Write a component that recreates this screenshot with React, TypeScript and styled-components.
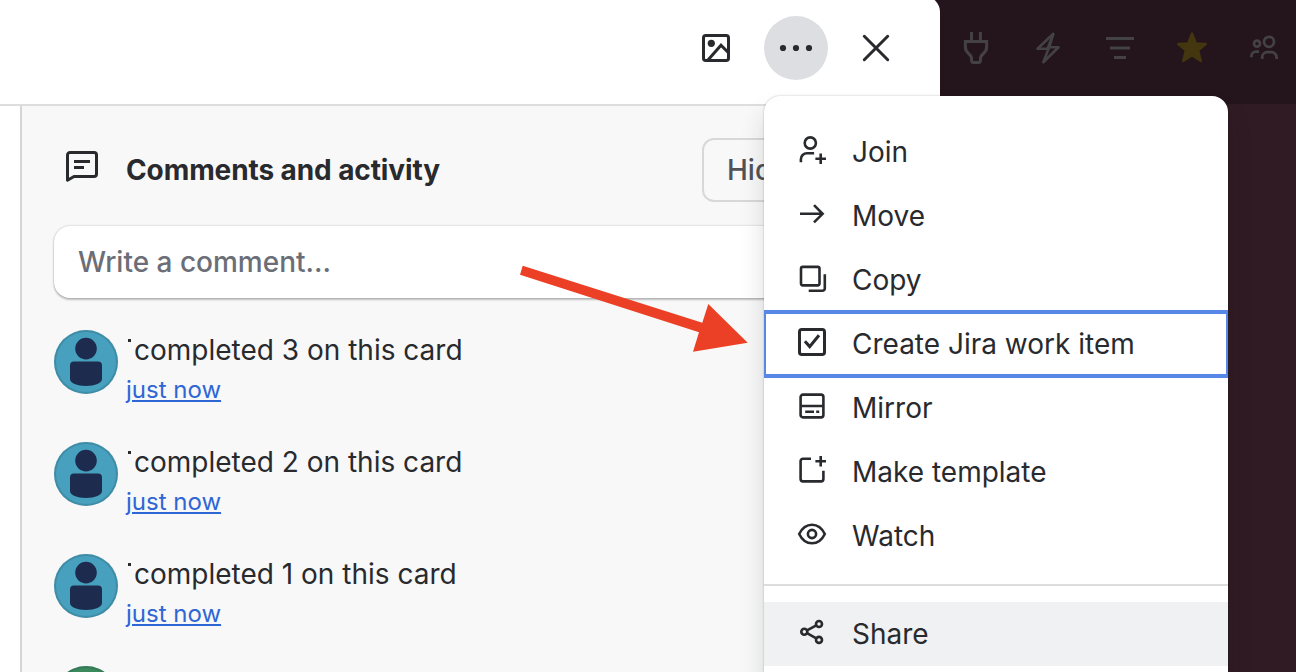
import React from 'react';
import styled, { createGlobalStyle } from 'styled-components';

const GlobalStyle = createGlobalStyle`
  *, *::before, *::after { box-sizing: border-box; }
  body {
    margin: 0;
    overflow: hidden;
    font-family: Inter, "Liberation Sans", sans-serif;
    color: #292a2e;
  }
`;

const Page = styled.div`
  position: relative;
  width: 1296px;
  height: 672px;
  overflow: hidden;
  background: #301a24;
`;

const BoardBar = styled.div`
  display: flex;
  align-items: center;
  justify-content: flex-end;
  gap: 40px;
  height: 104px;
  padding: 0 16px 8px 0;
  background: #24141b;
  color: #434143;
`;

const Glyph = styled.svg<{ $w?: number }>`
  display: block;
  flex: none;
  width: 32px;
  height: 32px;
  overflow: visible;
  fill: none;
  stroke: currentColor;
  stroke-width: ${(p) => p.$w ?? 3};
`;

const CardModal = styled.section`
  position: absolute;
  left: 0;
  top: -4px;
  display: flex;
  flex-direction: column;
  width: 940px;
  height: 680px;
  border-top-right-radius: 16px;
  background: #fff;
  overflow: hidden;
`;

const ModalHeader = styled.header`
  display: flex;
  align-items: center;
  justify-content: flex-end;
  gap: 16px;
  flex: none;
  height: 110px;
  padding: 0 32px 4px 0;
  border-bottom: 2px solid #dddddd;
`;

const RoundButton = styled.button<{ $active?: boolean }>`
  display: grid;
  place-items: center;
  width: 64px;
  height: 64px;
  padding: 0;
  border: 0;
  border-radius: 50%;
  background: ${(p) => (p.$active ? '#dddee1' : 'transparent')};
  color: #292a2e;
`;

const Activity = styled.aside`
  flex: 1;
  margin-left: 20px;
  padding: 32px 32px 0;
  border-left: 2px solid #d4d5d6;
  background: #f8f8f8;
`;

const TitleRow = styled.div`
  display: flex;
  align-items: center;
  height: 64px;
  padding-left: 12px;
  svg { margin: -8px 28px 0 0; }
`;

const Title = styled.h2`
  flex: none;
  width: 576px;
  margin: 0;
  font-size: 28px;
  line-height: 40px;
  font-weight: 650;
  letter-spacing: -0.1px;
`;

const DetailsButton = styled.button`
  flex: none;
  height: 64px;
  padding: 0 22px 0 23px;
  border: 2px solid #d8d8d9;
  border-radius: 12px;
  background: transparent;
  color: #505258;
  font: 500 28px/40px Inter, sans-serif;
  white-space: nowrap;
`;

const CommentBox = styled.div`
  height: 72px;
  margin: 24px 0 32px;
  padding: 16px 24px;
  border-radius: 16px;
  background: #fff;
  box-shadow: 0 2px 2px rgba(30, 31, 33, 0.25), 0 0 2px rgba(30, 31, 33, 0.31);
  color: #6b6e76;
  font-size: 28px;
  line-height: 40px;
  font-weight: 500;
`;

const Entry = styled.div`
  display: flex;
  gap: 8px;
  height: 112px;
`;

const Avatar = styled.div<{ $color: string }>`
  flex: none;
  width: 64px;
  height: 64px;
  border-radius: 50%;
  background: ${(p) => p.$color};
  box-shadow: inset 0 0 0 2px rgba(30, 50, 60, 0.18);
  svg { display: block; }
`;

const EntryText = styled.div`
  font-size: 28px;
  line-height: 40px;
  white-space: nowrap;
`;

const Message = styled.div`
  display: flex;
`;

const NameDot = styled.span`
  width: 3px;
  height: 3px;
  margin: 9px 3px 0 2px;
  background: #292a2e;
`;

const TimeLink = styled.a`
  display: block;
  color: #2e66d6;
  font-size: 24px;
  line-height: 40px;
  text-decoration: underline;
  text-decoration-thickness: 2px;
  text-underline-offset: 2px;
`;

const Menu = styled.nav`
  position: absolute;
  left: 764px;
  top: 96px;
  width: 464px;
  height: 620px;
  padding-top: 24px;
  border-radius: 16px;
  background: #fff;
  box-shadow: 0 16px 24px rgba(30, 31, 33, 0.15), 0 0 2px rgba(30, 31, 33, 0.31);
`;

const MenuClip = styled.div`
  overflow: hidden;
`;

const MenuItem = styled.div<{ $focused?: boolean; $hovered?: boolean }>`
  display: flex;
  align-items: center;
  gap: 24px;
  height: 64px;
  padding: 0 32px;
  background: ${(p) => (p.$hovered ? '#f0f1f2' : '#fff')};
  outline: ${(p) => (p.$focused ? '4px solid #5788e8' : 'none')};
  outline-offset: -2px;
  font-size: 28px;
  line-height: 40px;
  svg { margin-top: -4px; }
`;

const Divider = styled.hr`
  height: 2px;
  margin: 16px 0;
  border: 0;
  background: #dddddd;
`;

const Pointer = styled.svg`
  position: absolute;
  left: 500px;
  top: 240px;
  width: 260px;
  height: 120px;
`;

const items = [
  {
    label: 'Join',
    icon: (
      <>
        <circle cx="14.3" cy="9" r="5.6" />
        <path d="M4.9 28.3V25.2a6 6 0 0 1 6-6h7.2M24.7 19.4V30M19.4 24.7H30" />
      </>
    ),
  },
  { label: 'Move', icon: <path d="M4 15.8H26M18 7.2L26.6 15.8L18 24.4" /> },
  {
    label: 'Copy',
    icon: (
      <>
        <rect x="5" y="4.9" width="18.5" height="18.5" rx="1.8" />
        <path d="M28.8 12.3V26.4a2.4 2.4 0 0 1-2.4 2.4H12.7" />
      </>
    ),
  },
  {
    label: 'Create Jira work item',
    focused: true,
    stroke: 3,
    icon: (
      <>
        <rect x="3.5" y="3.5" width="25" height="25" rx="2.3" />
        <path d="M8.9 15.2L13.7 20.6L23 9.2" />
      </>
    ),
  },
  {
    label: 'Mirror',
    icon: (
      <>
        <rect x="4.6" y="4.6" width="22.8" height="22.8" rx="2.4" />
        <path d="M4.8 16H27.2M9.2 21.7H18M20.2 21.7H23.2" />
      </>
    ),
  },
  {
    label: 'Make template',
    icon: (
      <path d="M15 4.7H7a2.4 2.4 0 0 0-2.4 2.4V25a2.4 2.4 0 0 0 2.4 2.4h18a2.400 2.400 0 0 0 2.400-2.400V16.700M24.700 2V12.600M19.400 7.300H30" />
    ),
  },
  {
    label: 'Watch',
    icon: (
      <>
        <path d="M3.200 16C6 10.100 10.200 6.700 16 6.700S26 10.100 28.800 16C26 21.900 21.800 25.300 16 25.300S6 21.900 3.200 16Z" />
        <circle cx="16" cy="16" r="4.100" />
      </>
    ),
  },
];

const PersonAvatar = ({ color }: { color: string }) => (
  <Avatar $color={color}>
    <svg width="64" height="64" fill="#1d2b4f">
      <circle cx="32" cy="18.6" r="10.8" />
      <path d="M20 31.6h24a4 4 0 0 1 4 4V49c0 4-7 7-16 7s-16-3-16-7V35.6a4 4 0 0 1 4-4z" />
    </svg>
  </Avatar>
);

export default function App() {
  return (
    <Page>
      <GlobalStyle />
      <BoardBar>
        <Glyph>
          <path d="M11.5 0V9M20.4 0V9M5.4 9.4h21.2v6.2c0 3.4-1.6 4.8-3.6 6.4-1.8 1.4-2.6 2.6-2.6 5v1.5a2 2 0 0 1-2 2h-4.8a2 2 0 0 1-2-2V27c0-2.4-.8-3.6-2.6-5-2-1.600-3.600-3-3.600-6.400z" />
        </Glyph>
        <Glyph $w={2.6} strokeLinejoin="round">
          <path d="M21.300 1.800L5.500 16.800H16.600L11.300 30.200L26.600 15.300H17.300Z" />
          <path d="M21.300 1.800L15.600 16.800M16.600 16.800L17.300 15.300" />
        </Glyph>
        <Glyph>
          <path d="M2 6.400H30M6 16H26M10 25.500H22" />
        </Glyph>
        <Glyph color="#443710" $w={2.4} strokeLinejoin="round">
          <path
            fill="currentColor"
            d="M16 1.600l3.900 9.800 9.900.6-7.700 6.300 2.700 10.800L16 23.300l-8.800 5.800 2.700-10.800-7.700-6.300 9.900-.6z"
          />
        </Glyph>
        <Glyph $w={2.8}>
          <circle cx="9" cy="11.700" r="3" />
          <circle cx="21" cy="9.800" r="5" />
          <path d="M3.400 25.300V24.200a4.500 4.500 0 0 1 4.500-4.500H11M14.200 27V25.200a5 5 0 0 1 5-5h4.400a5 5 0 0 1 5 5V27" />
        </Glyph>
      </BoardBar>

      <CardModal>
        <ModalHeader>
          <RoundButton aria-label="Cover">
            <Glyph>
              <rect x="3.5" y="3.5" width="25" height="25" rx="2.3" />
              <circle cx="11.3" cy="11.3" r="3.600" fill="currentColor" stroke="none" />
              <path d="M8 28L21 13.200L28.500 20.800" />
            </Glyph>
          </RoundButton>
          <RoundButton $active aria-label="Actions">
            <Glyph>
              <g fill="currentColor" stroke="none">
                <circle cx="3" cy="16" r="3.100" />
                <circle cx="16" cy="16" r="3.100" />
                <circle cx="29" cy="16" r="3.100" />
              </g>
            </Glyph>
          </RoundButton>
          <RoundButton aria-label="Close">
            <Glyph strokeLinecap="round">
              <path d="M4.300 4.300L27.700 27.700M27.700 4.300L4.300 27.700" />
            </Glyph>
          </RoundButton>
        </ModalHeader>
        <Activity>
          <TitleRow>
            <Glyph>
              <path
                strokeLinejoin="round"
                d="M1.500 30.200V5A2.500 2.500 0 0 1 4 2.500H28A2.500 2.500 0 0 1 30.500 5V24A2.500 2.500 0 0 1 28 26.500H8Z"
              />
              <path d="M8 11.400H24M8 17.400H18" />
            </Glyph>
            <Title>Comments and activity</Title>
            <DetailsButton>Hide details</DetailsButton>
          </TitleRow>
          <CommentBox>Write a comment...</CommentBox>
          {[3, 2, 1].map((n) => (
            <Entry key={n}>
              <PersonAvatar color="#47a0bd" />
              <EntryText>
                <Message>
                  <NameDot />
                  completed {n} on this card
                </Message>
                <TimeLink>just now</TimeLink>
              </EntryText>
            </Entry>
          ))}
          <PersonAvatar color="#3a8a5e" />
        </Activity>
      </CardModal>

      <Menu>
        <MenuClip>
          {items.map((item) => (
            <MenuItem key={item.label} $focused={item.focused}>
              <Glyph $w={item.stroke ?? 2.6}>{item.icon}</Glyph>
              {item.label}
            </MenuItem>
          ))}
          <Divider />
          <MenuItem $hovered>
            <Glyph $w={2.6}>
              <circle cx="8.300" cy="15.700" r="3" />
              <circle cx="23" cy="8" r="3" />
              <circle cx="23" cy="23.900" r="3" />
              <path d="M11 14.300L20.300 9.400M11 17.100L20.300 22.400" />
            </Glyph>
            Share
          </MenuItem>
        </MenuClip>
      </Menu>

      <Pointer fill="#eb4025">
        <path d="M22.700 25.700L202.300 82.700L208.300 64L247.700 102.700L193 111.700L199 92.300L20 34.700Z" />
      </Pointer>
    </Page>
  );
}
